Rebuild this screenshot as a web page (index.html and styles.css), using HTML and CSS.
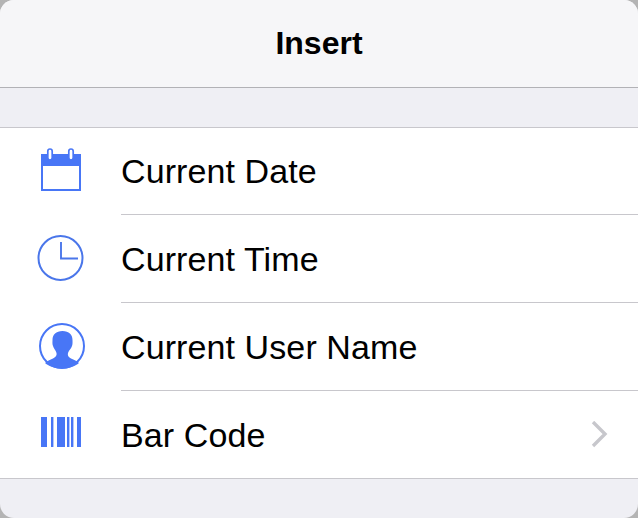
FILE: index.html
```html
<!DOCTYPE html>
<html lang="en">
<head>
  <meta charset="UTF-8">
  <title>Insert</title>
  <link rel="stylesheet" href="styles.css">
</head>
<body>

  <div class="sheet">
    <div class="nav-bar">Insert</div>

    <ul class="menu">
      <li class="menu-item">
        <svg class="icon" width="50" height="46" viewBox="0 0 50 46">
          <rect x="4" y="6" width="40" height="37" fill="#4876f6"/>
          <rect x="6" y="18" width="36" height="23" fill="#fff"/>
          <rect x="10.800" y="1" width="4.400" height="11" rx="2.200" fill="#fff" stroke="#4876f6" stroke-width="1.700"/>
          <rect x="31.800" y="1" width="4.400" height="11" rx="2.200" fill="#fff" stroke="#4876f6" stroke-width="1.700"/>
        </svg>
        <div class="item-body">
          <span class="menu-label">Current Date</span>
        </div>
      </li>
      <li class="menu-item">
        <svg class="icon" width="50" height="46" viewBox="0 0 50 46">
          <circle cx="23.500" cy="22" r="22" fill="none" stroke="#4a76ea" stroke-width="2"/>
          <path d="M24 6V22.500H41" fill="none" stroke="#4a76ea" stroke-width="1.900"/>
        </svg>
        <div class="item-body">
          <span class="menu-label">Current Time</span>
        </div>
      </li>
      <li class="menu-item">
        <svg class="icon" width="50" height="46" viewBox="0 0 50 46">
          <circle cx="25" cy="22" r="22" fill="none" stroke="#4876f6" stroke-width="2"/>
          <path d="M25.500 7C19 7 15.500 10.500 15.500 16C15.500 18 15.200 20 16 22C17 25 18.500 26 19.500 29C20 31 19 33 16 34.500C13 36 10 37 8 39C12 42.500 18 44.500 25 44.500C32 44.500 38 42.500 42 39C40 37 37 36 34 34.500C31 33 30.500 31 31 29C32 26 34 25 35 22C35.800 20 35.500 18 35.500 16C35.500 10.500 32 7 25.500 7Z" fill="#4876f6"/>
        </svg>
        <div class="item-body">
          <span class="menu-label">Current User Name</span>
        </div>
      </li>
      <li class="menu-item">
        <svg class="icon" width="50" height="46" viewBox="0 0 50 46">
          <g fill="#4876f6">
            <rect x="4" y="5" width="6" height="30"/>
            <rect x="14" y="5" width="2.400" height="30"/>
            <rect x="20" y="5" width="8" height="30"/>
            <rect x="30" y="5" width="2.400" height="30"/>
            <rect x="34" y="5" width="2.400" height="30"/>
            <rect x="40" y="5" width="4" height="30"/>
          </g>
        </svg>
        <div class="item-body">
          <span class="menu-label">Bar Code</span>
          <svg class="chevron" width="18" height="28" viewBox="0 0 18 28">
            <path d="M3 1L15 13L3 25" fill="none" stroke="#c7c7cc" stroke-width="3.400"/>
          </svg>
        </div>
      </li>
    </ul>
  </div>

</body>
</html>
```

FILE: styles.css
```css
html, body {
  margin: 0;
  height: 100%;
  background-color: #b4b4b4;
}
body {
  font-family: "Liberation Sans", Arial, sans-serif;
  color: #000;
}
.sheet {
  height: 518px;
  border-radius: 14px;
  overflow: hidden;
  background-color: #efeff4;
}
.nav-bar {
  height: 87px;
  line-height: 87px;
  text-align: center;
  font-size: 32px;
  font-weight: bold;
  background-color: #f6f6f8;
  border-bottom: 1px solid #b2b2b6;
}
.menu {
  list-style: none;
  margin: 39px 0 0;
  padding: 0;
  background-color: #fff;
  border-top: 1px solid #c8c7cc;
  border-bottom: 1px solid #c8c7cc;
}
.menu-item {
  display: flex;
  padding-left: 37px;
  height: 88px;
}
.menu-item:first-child,
.menu-item:last-child {
  height: 87px;
}
.icon {
  flex: none;
  margin: 21px 34px 0 0;
  overflow: visible;
}
.menu-item:first-child .icon {
  margin-top: 20px;
}
.item-body {
  flex: 1;
  display: flex;
  align-items: center;
  justify-content: space-between;
  padding-right: 30px;
  border-bottom: 1px solid #c8c7cc;
}
.menu-item + .menu-item .item-body {
  padding-top: 1px;
}
.menu-item:last-child .item-body {
  border-bottom: none;
}
.menu-label {
  font-size: 34px;
  letter-spacing: 0.1px;
}
.chevron {
  flex: none;
}
```
